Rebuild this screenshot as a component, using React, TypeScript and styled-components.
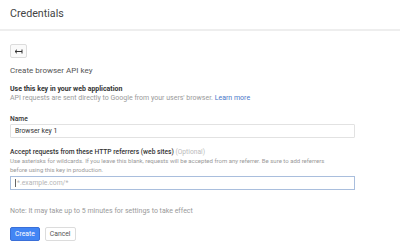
import React from "react";
import styled, { createGlobalStyle } from "styled-components";

const Global = createGlobalStyle`
  html, body { margin: 0; padding: 0; background: #fff; }
  body { font-family: Roboto, "Liberation Sans", Arial, sans-serif; }
  * { box-sizing: border-box; }
`;

const Page = styled.div`
  width: 400px;
  height: 248px;
  overflow: hidden;
  background: #fff;
`;

const Header = styled.header`
  height: 31px;
  border-bottom: 2px solid #eeeeee;
  display: flex;
  align-items: center;
  padding: 0 10px 3px;
`;

const Title = styled.h1`
  margin: 0;
  font-size: 10.7px;
  font-weight: 400;
  color: #444;
`;

const Body = styled.main`
  padding: 13px 10px 0;
  display: flex;
  flex-direction: column;
`;

const BackButton = styled.button`
  width: 17px;
  height: 14px;
  padding: 0;
  border: 1px solid #dcdcdc;
  border-radius: 2px;
  background: #fafafa;
  display: flex;
  align-items: center;
  justify-content: center;
`;

const Heading = styled.h2`
  margin: 8px 0 0;
  font-size: 8px;
  font-weight: 400;
  color: #555;
  line-height: 10px;
`;

const Strong = styled.div`
  margin-top: 9px;
  font-size: 7px;
  font-weight: 700;
  color: #333;
  line-height: 8px;
`;

const Muted = styled.div<{ $top?: number; $size?: number }>`
  margin-top: ${(p) => p.$top ?? 0}px;
  font-size: ${(p) => p.$size ?? 7}px;
  color: #9a9a9a;
  line-height: 9px;
`;

const Link = styled.a`
  color: #4a78c9;
  text-decoration: none;
`;

const Label = styled.div<{ $top: number }>`
  margin-top: ${(p) => p.$top}px;
  font-size: 6.7px;
  font-weight: 500;
  color: #333;
  line-height: 8px;
`;

const Optional = styled.span`
  color: #bbb;
  font-weight: 400;
`;

const Input = styled.input<{ $top?: number }>`
  margin-top: ${(p) => p.$top ?? 0}px;
  width: 345px;
  height: 14px;
  border: 1px solid #e2e2e2;
  border-radius: 1px;
  padding: 0 4px;
  font-family: inherit;
  font-size: 6.8px;
  color: #333;
  outline: none;
  background: #fff;
`;

const Cursor = styled.span`
  display: inline-block;
  width: 1px;
  height: 8px;
  background: #666;
  margin-right: 1px;
`;

const FocusedInput = styled.div<{ $top?: number }>`
  margin-top: ${(p) => p.$top ?? 0}px;
  width: 345px;
  height: 14px;
  border: 1px solid #a9bedd;
  padding: 0 4px;
  display: flex;
  align-items: center;
  font-size: 6.8px;
  color: #b5b5b5;
`;

const Note = styled.div`
  margin-top: 17px;
  font-size: 7px;
  color: #9a9a9a;
  line-height: 9px;
`;

const Actions = styled.div`
  margin-top: 11px;
  display: flex;
  gap: 5px;
`;

const Btn = styled.button<{ $primary?: boolean }>`
  height: 14px;
  padding: 0 4px;
  border-radius: 2px;
  font-family: inherit;
  font-size: 6.8px;
  border: 1px solid ${(p) => (p.$primary ? "#3a6fd8" : "#dcdcdc")};
  background: ${(p) => (p.$primary ? "#4285f4" : "#fff")};
  color: ${(p) => (p.$primary ? "#fff" : "#555")};
`;

export default function App() {
  return (
    <Page>
      <Global />
      <Header>
        <Title>Credentials</Title>
      </Header>
      <Body>
        <div>
          <BackButton aria-label="Back">
            <svg width="9" height="5" viewBox="0 0 9 5">
              <path d="M1 2.5H8M8 0.5V4.5M1 2.5L3 0.7M1 2.5L3 4.3" stroke="#333" strokeWidth="1" fill="none" />
            </svg>
          </BackButton>
        </div>
        <Heading>Create browser API key</Heading>
        <Strong>Use this key in your web application</Strong>
        <Muted $top={1}>
          API requests are sent directly to Google from your users' browser. <Link>Learn more</Link>
        </Muted>
        <Label $top={12}>Name</Label>
        <Input $top={1} defaultValue="Browser key 1" />
        <Label $top={10}>
          Accept requests from these HTTP referrers (web sites) <Optional>(Optional)</Optional>
        </Label>
        <Muted $size={6}>
          Use asterisks for wildcards. If you leave this blank, requests will be accepted from any referrer. Be sure to add referrers
          <br />
          before using this key in production.
        </Muted>
        <FocusedInput $top={2}>
          <Cursor />*.example.com/*
        </FocusedInput>
        <Note>Note: It may take up to 5 minutes for settings to take effect</Note>
        <Actions>
          <Btn $primary>Create</Btn>
          <Btn>Cancel</Btn>
        </Actions>
      </Body>
    </Page>
  );
}
